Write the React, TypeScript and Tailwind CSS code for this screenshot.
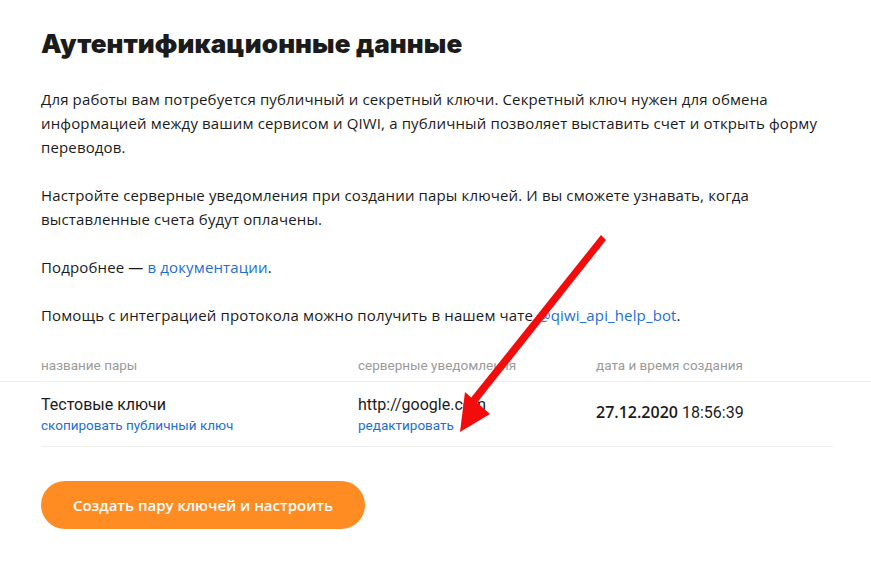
const body = "font-['Open_Sans',sans-serif]";
const narrow = "font-['Liberation_Sans_Narrow','Roboto',sans-serif]";

function Arrow() {
  return (
    <svg className="absolute left-0 top-0 pointer-events-none" width="871" height="569" viewBox="0 0 871 569">
      <path d="M601 235 L606 240 L476 404 L470 399 Z" fill="#f20c0c" />
      <path d="M460 432 L465 392 L490 414 Z" fill="#f20c0c" />
    </svg>
  );
}

export default function App() {
  return (
    <div className="relative w-[871px] h-[569px] bg-white overflow-hidden text-[#1b1b1b]">
      <div className="pt-[26px]">
        <h1 className="px-[41px] text-[26px] leading-[36px] font-black font-['Inter',sans-serif] tracking-[0.1px]">
          Аутентификационные данные
        </h1>
        <div className={`${body} px-[41px] mt-[25px] text-[15px] leading-[24px] tracking-[0.14px] flex flex-col gap-[24px]`}>
          <p>
            Для работы вам потребуется публичный и секретный ключи. Секретный ключ нужен для обмена
            информацией между вашим сервисом и QIWI, а публичный позволяет выставить счет и открыть форму
            переводов.
          </p>
          <p>
            Настройте серверные уведомления при создании пары ключей. И вы сможете узнавать, когда
            выставленные счета будут оплачены.
          </p>
          <p>
            Подробнее — <span className="text-[#1d6fd1]">в документации</span>.
          </p>
          <p>
            Помощь с интеграцией протокола можно получить в нашем чате{" "}
            <span className="text-[#1d6fd1]">@qiwi_api_help_bot</span>.
          </p>
        </div>
        <div className={`${narrow} mt-[23px]`}>
          <div className="flex px-[41px] h-[32px] items-center text-[13.5px] text-[#9a9a9a] border-b border-[#eeeeee]">
            <div className="w-[317px]">название пары</div>
            <div className="w-[238px]">серверные уведомления</div>
            <div>дата и время создания</div>
          </div>
          <div className="mx-[41px] w-[792px] flex items-center h-[65px] border-b border-[#eeeeee]">
            <div className="w-[317px] flex flex-col">
              <span className="text-[16px] leading-[22px]">Тестовые ключи</span>
              <span className="text-[13.5px] leading-[19px] text-[#1d6fd1]">скопировать публичный ключ</span>
            </div>
            <div className="w-[238px] flex flex-col">
              <span className="text-[16px] leading-[22px]">http://google.com</span>
              <span className="text-[13.5px] leading-[19px] text-[#1d6fd1]">редактировать</span>
            </div>
            <div className="text-[16px] flex items-baseline gap-[4px] -mt-[3px]">
              <span className={`${body} font-semibold`}>27.12.2020</span>
              <span>18:56:39</span>
            </div>
          </div>
        </div>
        <div className="px-[41px] mt-[34px]">
          <button className={`${body} w-[324px] h-[48px] rounded-full bg-[#ff8c22] text-white text-[15px] font-semibold`}>
            Создать пару ключей и настроить
          </button>
        </div>
      </div>
      <Arrow />
    </div>
  );
}
